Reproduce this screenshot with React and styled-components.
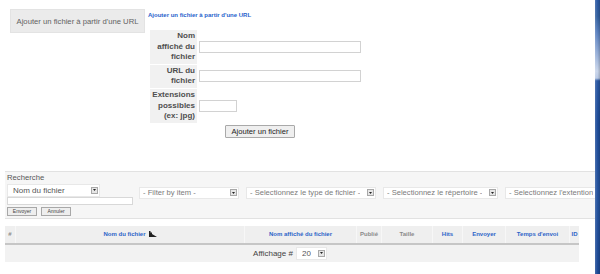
import React from "react";
import styled, { createGlobalStyle } from "styled-components";

const GlobalStyle = createGlobalStyle`
  html, body {
    margin: 0;
    padding: 0;
    background: #fff;
  }
  body {
    font-family: "Liberation Sans", Arial, sans-serif;
  }
`;

const formRows = [
  { label: ["Nom", "affiché du", "fichier"], width: 162 },
  { label: ["URL du", "fichier"], width: 162 },
  { label: ["Extensions", "possibles", "(ex: jpg)"], width: 38 },
];

const filters = [
  { text: "- Filter by item -", width: 100 },
  { text: "- Selectionnez le type de fichier -", width: 130 },
  { text: "- Selectionnez le répertoire -", width: 115 },
  { text: "- Selectionnez l'extention", width: 120 },
];

// largeur, texte, couleur (bleu = triable)
const columns = [
  { w: 11, label: "#", link: false },
  { w: 229, label: "Nom du fichier", link: true, sort: true },
  { w: 112, label: "Nom affiché du fichier", link: true },
  { w: 25, label: "Publié", link: false },
  { w: 51, label: "Taille", link: false },
  { w: 30, label: "Hits", link: true },
  { w: 43, label: "Envoyer", link: true },
  { w: 64, label: "Temps d'envoi", link: true },
  { w: 9, label: "ID", link: true },
];

const SortIcon = () => (
  <svg width="8" height="6" viewBox="0 0 8 6">
    <polygon points="0,0 1.5,0 1.5,1.5 3,1.5 3,3 8,6 0,6" fill="#222" />
  </svg>
);

const Select = ({ children, width, big }) => (
  <SelectBox $w={width} $big={big}>
    <SelectText $big={big}>{children}</SelectText>
    <ArrowBox>
      <svg width="3" height="2" viewBox="0 0 3 2">
        <polygon points="0,0 3,0 1.5,2" fill="#222" />
      </svg>
    </ArrowBox>
  </SelectBox>
);

const App = () => {
  return (
    <>
      <GlobalStyle />
      <Page>
        <Main>
          <TopBar>
            <GreyButton>Ajouter un fichier à partir d'une URL</GreyButton>
            <HeadLink>Ajouter un fichier à partir d'une URL</HeadLink>
          </TopBar>

          <FormTable>
            {formRows.map((row, i) => (
              <FormRow key={i}>
                <Label>
                  {row.label.map((line) => (
                    <div key={line}>{line}</div>
                  ))}
                </Label>
                <Field>
                  <TextInput $w={row.width} />
                </Field>
              </FormRow>
            ))}
          </FormTable>
          <SubmitButton>Ajouter un fichier</SubmitButton>

          <SearchPanel>
            <SearchBlock>
              <SearchTitle>Recherche</SearchTitle>
              <Select width={93} big>
                Nom du fichier
              </Select>
              <SearchInput />
              <MiniButtons>
                <MiniButton>Envoyer</MiniButton>
                <MiniButton>Annuler</MiniButton>
              </MiniButtons>
            </SearchBlock>
            <Filters>
              {filters.map((f) => (
                <Select key={f.text} width={f.width}>
                  {f.text}
                </Select>
              ))}
            </Filters>
          </SearchPanel>

          <ResultTable>
            <HeaderRow>
              {columns.map((c) => (
                <HeadCell key={c.label} $w={c.w} $link={c.link}>
                  {c.label}
                  {c.sort && <SortIcon />}
                </HeadCell>
              ))}
            </HeaderRow>
            <FooterRow>
              <FooterLabel>Affichage #</FooterLabel>
              <Select width={31} big>
                20
              </Select>
            </FooterRow>
          </ResultTable>
        </Main>
        <WindowEdge />
      </Page>
    </>
  );
};

// ===== Styled Components =====

const Page = styled.div`
  display: flex;
  width: 600px;
  height: 274px;
  overflow: hidden;
`;

const Main = styled.div`
  flex: 1;
  min-width: 0;
  display: flex;
  flex-direction: column;
  align-items: flex-start;
  overflow: hidden;
`;

const WindowEdge = styled.div`
  width: 5px;
  flex-shrink: 0;
  background:
    linear-gradient(to right, rgba(255, 255, 255, 0.18), rgba(255, 255, 255, 0) 50%, rgba(0, 0, 0, 0.18)),
    linear-gradient(
      to bottom,
      #2b58a4 0%,
      #33609f 6%,
      #5a80bf 12%,
      #98b0d8 20%,
      #c9d5ea 26%,
      #b8c8e4 28.5%,
      #2b58a3 29.5%,
      #1f4d9a 45%,
      #26549f 70%,
      #1d4a96 100%
    );
`;

const TopBar = styled.div`
  display: flex;
  align-items: flex-start;
  margin: 9px 0 0 10px;
`;

const GreyButton = styled.div`
  width: 135px;
  height: 24px;
  box-sizing: border-box;
  display: flex;
  align-items: center;
  justify-content: center;
  background: #ebebeb;
  border: 1px solid #e3e3e3;
  color: #626262;
  font-size: 7.7px;
  white-space: nowrap;
`;

const HeadLink = styled.a`
  margin: 3px 0 0 3px;
  color: #1f5fcc;
  font-size: 6px;
  font-weight: bold;
  white-space: nowrap;
  cursor: pointer;
`;

const FormTable = styled.div`
  display: flex;
  flex-direction: column;
  gap: 1px;
  margin: -3px 0 0 150px;
`;

const FormRow = styled.div`
  display: flex;
`;

const Label = styled.div`
  width: 47px;
  box-sizing: border-box;
  padding: 1px 2px 1px 0;
  background: #f1f1f1;
  color: #4e4e4e;
  font-size: 8px;
  font-weight: bold;
  line-height: 10.6px;
  text-align: right;
  white-space: nowrap;
`;

const Field = styled.div`
  display: flex;
  align-items: center;
  padding-left: 2px;
`;

const TextInput = styled.div`
  width: ${(p) => p.$w}px;
  height: 12px;
  box-sizing: border-box;
  background: #fff;
  border: 1px solid #d2d2d2;
`;

const SubmitButton = styled.div`
  margin: 2px 0 0 225px;
  width: 70px;
  height: 13px;
  box-sizing: border-box;
  display: flex;
  align-items: center;
  justify-content: center;
  background: #efefef;
  border: 1px solid #a9a9a9;
  border-radius: 1px;
  color: #222;
  font-size: 7.6px;
  white-space: nowrap;
`;

const SearchPanel = styled.div`
  align-self: stretch;
  display: flex;
  align-items: flex-start;
  margin: 33px 0 0 5px;
  height: 48px;
  box-sizing: border-box;
  padding-left: 2px;
  background: #f6f6f6;
  border-top: 1px solid #e2e2e2;
  border-bottom: 1px solid #e2e2e2;
  overflow: hidden;
`;

const SearchBlock = styled.div`
  display: flex;
  flex-direction: column;
  align-items: flex-start;
  width: 126px;
  flex-shrink: 0;
`;

const SearchTitle = styled.div`
  color: #555;
  font-size: 7.7px;
  line-height: 10px;
  margin: 1px 0 1px;
`;

const SelectBox = styled.div`
  width: ${(p) => p.$w}px;
  height: ${(p) => (p.$big ? 13 : 12)}px;
  flex-shrink: 0;
  box-sizing: border-box;
  display: flex;
  align-items: center;
  justify-content: space-between;
  padding: 0 1px 0 ${(p) => (p.$big ? 5 : 3)}px;
  background: #fff;
  border: 1px solid #e8e8e8;
`;

const SelectText = styled.span`
  color: ${(p) => (p.$big ? "#555" : "#7a7a7a")};
  font-size: ${(p) => (p.$big ? 8 : 7.6)}px;
  white-space: nowrap;
  overflow: hidden;
`;

const ArrowBox = styled.span`
  width: 7px;
  height: 7px;
  flex-shrink: 0;
  box-sizing: border-box;
  display: flex;
  align-items: center;
  justify-content: center;
  background: #e6e6e6;
  border: 1px solid #a8a8a8;
`;

const SearchInput = styled.div`
  width: 126px;
  height: 8px;
  box-sizing: border-box;
  background: #fff;
  border: 1px solid #d8d8d8;
`;

const MiniButtons = styled.div`
  display: flex;
  gap: 4px;
  margin-top: 2px;
`;

const MiniButton = styled.div`
  width: 30px;
  height: 9px;
  box-sizing: border-box;
  display: flex;
  align-items: center;
  justify-content: center;
  background: #eee;
  border: 1px solid #a8a8a8;
  color: #444;
  font-size: 5px;
`;

const Filters = styled.div`
  display: flex;
  gap: 7px;
  margin: 15px 0 0 6px;
`;

const ResultTable = styled.div`
  margin: 7px 0 0 5px;
  width: 574px;
  display: flex;
  flex-direction: column;
`;

const HeaderRow = styled.div`
  display: flex;
  height: 17px;
  background: #efefef;
  border-bottom: 2px solid #c6c6c6;
`;

const HeadCell = styled.div`
  width: ${(p) => p.$w}px;
  flex-shrink: 0;
  display: flex;
  align-items: center;
  justify-content: center;
  gap: 3px;
  color: ${(p) => (p.$link ? "#2d64c8" : "#8a8a8a")};
  font-size: 6px;
  font-weight: bold;
  white-space: nowrap;
  border-right: 1px solid #f7f7f7;
  box-sizing: border-box;
  &:last-child {
    border-right: none;
  }
`;

const FooterRow = styled.div`
  display: flex;
  align-items: center;
  justify-content: center;
  gap: 3px;
  height: 17px;
  padding-right: 4px;
  background: #f2f2f2;
`;

const FooterLabel = styled.span`
  color: #444;
  font-size: 8px;
`;

export default App;
